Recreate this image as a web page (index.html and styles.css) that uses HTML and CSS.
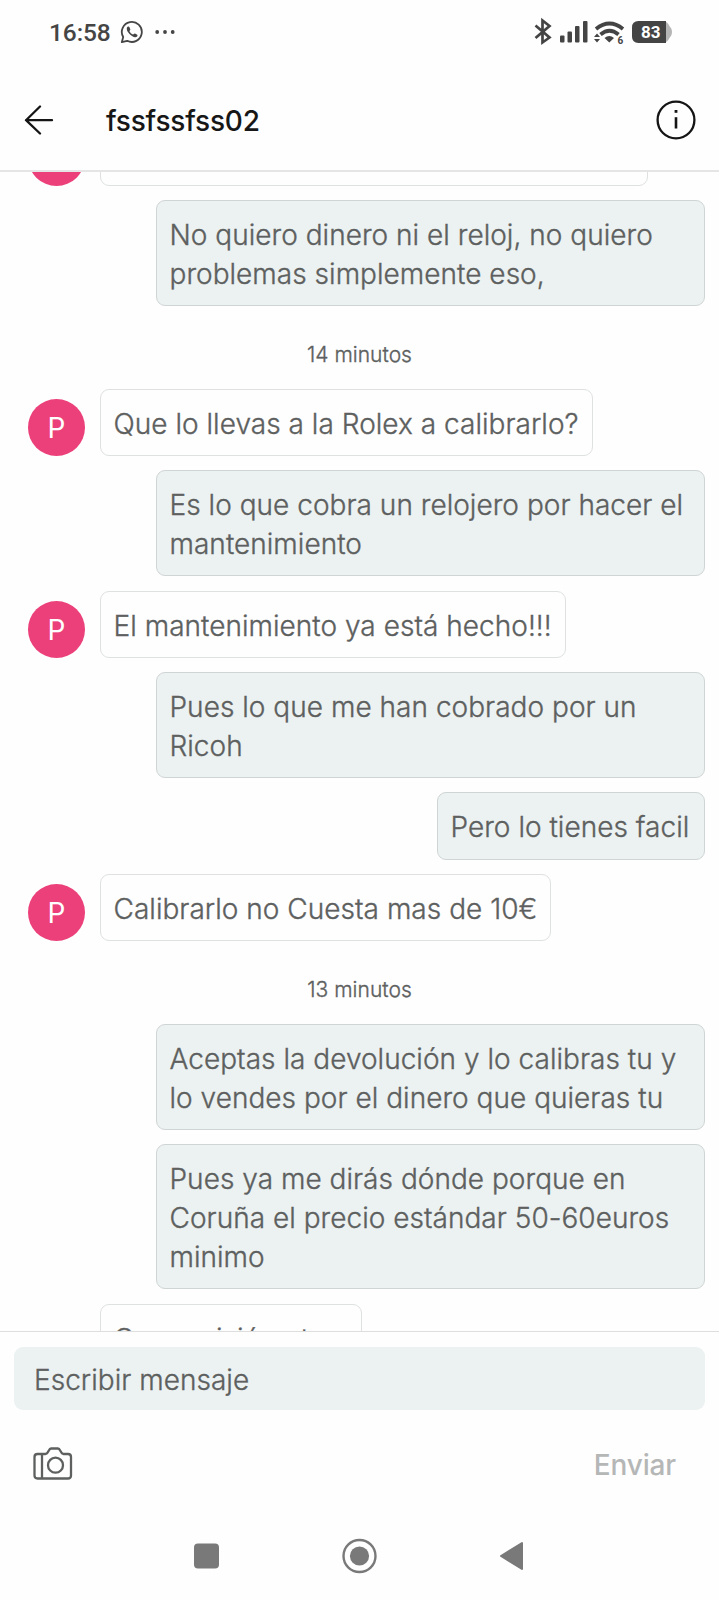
FILE: index.html
```html
<!DOCTYPE html>
<html lang="es">
<head>
<meta charset="utf-8">
<title>Chat</title>
<link rel="stylesheet" href="styles.css">
</head>
<body>
<div class="screen">
  <div class="status">
    <span class="clock">16:58</span>
    <svg class="whatsapp" width="24" height="24" viewBox="0 0 24 24" fill="none" stroke="#454545" stroke-width="1.8">
      <path d="M1.800 22.200 3.200 17A10 10 0 1 1 7.200 20.800Z" stroke-linejoin="round"/>
      <path d="M8 6.500c-2.200 1.300-1.300 4.500 1.500 7.500s6.300 4.300 7.800 2.200c.7-1-.1-1.500-2.300-2.600-.9-.4-1.100.9-2 1-1.300-.3-3.200-2.200-3.600-3.500.2-.8 1.200-1.100.9-1.900C9.600 7.200 9.200 6 8 6.500Z" fill="#454545" stroke="none"/>
    </svg>
    <svg class="dots" width="20" height="6" viewBox="0 0 20 6" fill="#454545"><circle cx="2.200" cy="3" r="1.900"/><circle cx="10" cy="3" r="1.900"/><circle cx="17.700" cy="3" r="1.900"/></svg>
    <svg class="signals" width="140" height="30" viewBox="532 17 140 30" fill="#444">
      <path d="M535.500 25.500 549.500 37.500 542.500 42.500V20.500L549.500 26 535.500 38" fill="none" stroke="#444" stroke-width="2.700"/>
      <rect x="560" y="35.500" width="4.500" height="7" rx="1"/><rect x="567.500" y="31.500" width="4.500" height="11" rx="1"/><rect x="575" y="26" width="4.500" height="16.500" rx="1"/><rect x="583" y="21" width="4.500" height="21.500" rx="1"/>
      <path d="M596 29Q609.500 18 623 29M600.500 34.500Q609.500 27 618.500 34.500" fill="none" stroke="#444" stroke-width="3.800"/>
      <path d="M604.500 38Q609.300 34 614 38L609.300 42.500ZM594 37 597 33.500 600 37ZM594 39 597 42.500 600 39Z"/>
      <text x="617.500" y="43.500" class="wifi-gen">6</text>
      <path d="M664 21.500C668 21.500 669 26 671 28Q673 32 671 36C669 38 668 42.500 664 42.500Z" fill="#b5b5b5"/>
      <path d="M638.500 21H666V43H638.500Q632 43 632 36.500V27.500Q632 21 638.500 21Z"/>
      <text x="650.800" y="37.700" class="battery">83</text>
    </svg>
  </div>
  <div class="header">
    <svg width="30" height="30" viewBox="0 0 30 30" fill="none" stroke="#151515" stroke-width="2.300" stroke-linecap="round" stroke-linejoin="round"><path d="M16 1.500 2 15.200 16 28.500M2 15.200H28"/></svg>
    <h1 class="name">fssfssfss02</h1>
    <svg width="40" height="40" viewBox="0 0 40 40" fill="none" stroke="#151515" stroke-width="2.300"><circle cx="20" cy="20" r="18.400"/><path d="M20 17.200V28.500" stroke-width="2.600"/><rect x="18.600" y="10" width="2.800" height="2.800" fill="#151515" stroke="none"/></svg>
  </div>
  <div class="chat">
    <div class="row first"><div class="avatar"></div><div class="bubble cut"></div></div>
    <div class="row own"><div class="bubble">No quiero dinero ni el reloj, no quiero<br>problemas simplemente eso,</div></div>
    <div class="time">14 minutos</div>
    <div class="row"><div class="avatar">P</div><div class="bubble">Que lo llevas a la Rolex a calibrarlo?</div></div>
    <div class="row own"><div class="bubble">Es lo que cobra un relojero por hacer el<br>mantenimiento</div></div>
    <div class="row"><div class="avatar">P</div><div class="bubble">El mantenimiento ya está hecho!!!</div></div>
    <div class="row own"><div class="bubble">Pues lo que me han cobrado por un<br>Ricoh</div></div>
    <div class="row own"><div class="bubble short">Pero lo tienes facil</div></div>
    <div class="row"><div class="avatar">P</div><div class="bubble">Calibrarlo no Cuesta mas de 10€</div></div>
    <div class="time">13 minutos</div>
    <div class="row own"><div class="bubble">Aceptas la devolución y lo calibras tu y<br>lo vendes por el dinero que quieras tu</div></div>
    <div class="row own"><div class="bubble">Pues ya me dirás dónde porque en<br>Coruña el precio estándar 50-60euros<br>minimo</div></div>
    <div class="row last"><div class="bubble">Con revisión etc...</div></div>
  </div>
  <div class="composer">
    <div class="field">Escribir mensaje</div>
    <div class="actions">
      <svg width="40" height="34" viewBox="0 0 40 34" fill="none" stroke="#5d605f" stroke-width="2.300" stroke-linejoin="round"><path d="M4.500 7H12.500C15.500 7 15.500 1.500 18 1.500H25C27.500 1.500 27.500 7 30.500 7H35Q38 7 38 10V28.500Q38 31.500 35 31.500H4.500Q1.500 31.500 1.500 28.500V10Q1.500 7 4.500 7ZM9 7V31.500"/><circle cx="22.500" cy="18.200" r="7.500"/></svg>
      <span class="send">Enviar</span>
    </div>
  </div>
  <div class="nav">
    <svg width="719" height="44" viewBox="0 0 719 44" fill="#797979"><rect x="194" y="9.500" width="25" height="25" rx="4"/><circle cx="359.500" cy="22" r="16" fill="none" stroke="#797979" stroke-width="2.400"/><circle cx="359.500" cy="22" r="9.600"/><path d="M501 22 522 9V35Z" stroke="#797979" stroke-width="2" stroke-linejoin="round"/></svg>
  </div>
</div>
</body>
</html>
```
FILE: styles.css
```css
* { box-sizing: border-box; }
body { margin: 0; background: #fefefe; font-family: Inter, "Liberation Sans", sans-serif; color: #5d605f; }
svg { display: block; flex: none; }
.screen { width: 719px; height: 1600px; display: flex; flex-direction: column; overflow: hidden; }
.status { height: 64px; flex: none; display: flex; align-items: center; padding: 0 47px 0 49px; }
.clock { font: 500 24.500px/30px Roboto, sans-serif; color: #454545; width: 61px; padding-top: 2px; letter-spacing: -0.1px; white-space: nowrap; }
.whatsapp { margin-left: 10px; }
.dots { margin-left: 11px; }
.signals { margin-left: auto; }
.wifi-gen { font: 700 10px Roboto, sans-serif; }
.battery { font: 700 17px Roboto, sans-serif; fill: #fff; text-anchor: middle; }
.header { height: 108px; flex: none; display: flex; align-items: center; padding: 6px 23px 0 24px; border-bottom: 2px solid #e5e5e5; }
.name { flex: 1; margin: 0 0 0 52px; font-size: 28px; font-weight: 500; letter-spacing: -0.2px; line-height: 36px; color: #171717; padding-top: 1px; }
.chat { height: 1159px; flex: none; display: flex; flex-direction: column; gap: 14.250px; overflow: hidden; }
.row { display: flex; align-items: flex-end; flex: none; padding: 0 14.500px 0 28px; }
.own { justify-content: flex-end; }
.avatar { width: 57px; height: 57px; margin-right: 14.500px; border-radius: 50%; background: #ec407a; color: #fff; font-size: 28px; line-height: 59px; text-align: center; flex: none; }
.bubble, .field, .time { font-weight: 300; letter-spacing: 0.03px; -webkit-text-stroke: 0.35px currentColor; }
.bubble { padding: 15px 13px 11px; border: 1px solid #dfe1e1; border-radius: 9px; background: #fefefe; font-size: 28px; line-height: 39.100px; white-space: nowrap; }
.own .bubble { width: 549px; background: #ecf2f1; border-color: #cfd5d4; }
.own .short { width: 268px; }
.first { margin-top: -53.400px; }
.cut { width: 548.500px; height: 67px; }
.time { height: 54.300px; flex: none; padding-top: 20px; font-size: 21px; line-height: 30px; text-align: center; }
.last { padding-left: 99.500px; }
.composer { height: 173px; flex: none; padding: 14.500px 14px 0; border-top: 1px solid #dedede; }
.field { height: 63px; border-radius: 9px; background: #ecf2f1; padding: 0 20px; font-size: 28px; line-height: 66px; }
.actions { display: flex; justify-content: space-between; align-items: center; height: 76px; padding: 32px 29px 0 19px; }
.send { font-size: 28px; font-weight: 500; letter-spacing: -0.15px; line-height: 34px; color: #b5b7b7; padding-top: 2px; }
.nav { padding-top: 30px; }
```
